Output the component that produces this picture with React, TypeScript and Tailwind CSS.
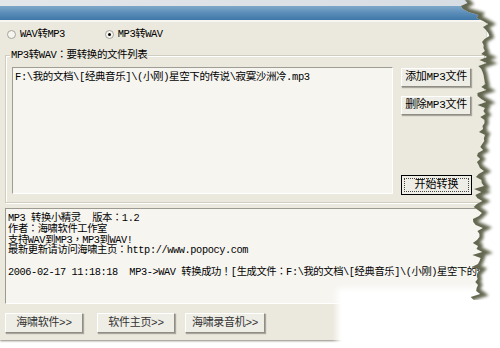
import React from 'react';

// 1. DONNÉES
const logLines = [
  'MP3 转换小精灵  版本：1.2',
  '作者：海啸软件工作室',
  '支持WAV到MP3，MP3到WAV!',
  '最新更新请访问海啸主页：http://www.popocy.com',
  '\u00a0',
  '2006-02-17 11:18:18  MP3->WAV 转换成功！[生成文件：F:\\我的文档\\[经典音乐]\\(小刚)星空下的传说\\寂寞沙洲冷.wav]',
];

const font = "font-['Liberation_Mono','Noto_Sans_CJK_TC',monospace]";

// bord déchiré (coordonnées locales du svg, x 0 = 450px)
function tornEdge() {
  const pts: [number, number][] = [];
  let seed = 11;
  const rnd = () => {
    seed = (seed * 9301 + 49297) % 233280;
    return seed / 233280;
  };
  for (let y = 0; y <= 300; y += 3) {
    let base = 30;
    if (y < 6) base = 13;
    else if (y < 20) base = 13 + (y - 6) * 1.4;
    else base = 35 - (y - 20) * 0.035;
    const j = (rnd() - 0.5) * 11;
    pts.push([base + j, y]);
  }
  return pts;
}

function Radio({ checked, label }: { checked?: boolean; label: string }) {
  return (
    <div className="flex items-center gap-[4px]">
      <span className="w-[9px] h-[9px] rounded-full border border-[#a4a39a] bg-[#f6f5f0] flex items-center justify-center">
        {checked && <span className="w-[3px] h-[3px] rounded-full bg-black" />}
      </span>
      <span className="text-[10.5px] leading-none tracking-[-0.5px] text-black">{label}</span>
    </div>
  );
}

function XpButton({ label, className = '', def }: { label: string; className?: string; def?: boolean }) {
  if (def) {
    return (
      <div className={`border border-black bg-[#eeede6] p-[2px] ${className}`}>
        <div className="h-full border border-dotted border-[#444] flex items-center justify-center text-[11px] leading-none text-black">
          {label}
        </div>
      </div>
    );
  }
  return (
    <div
      className={`border border-t-white border-l-white border-r-[#8f8d84] border-b-[#8f8d84] bg-[#eeede6] shadow-[1px_1px_1px_#a9a79e] flex items-center justify-center text-[11px] leading-none tracking-[-0.3px] ${className}`}
    >
      {label}
    </div>
  );
}

export default function App() {
  const pts = tornEdge();
  const line = pts.map(([x, y]) => `${x},${y}`).join(' ');
  const white = `50,0 ${line} 50,300`;

  return (
    <div className={`relative w-[500px] h-[348px] overflow-hidden bg-white text-black ${font}`}>
      {/* Fenêtre */}
      <div className="w-[486px] h-[340px] bg-[#ebe9dd] flex flex-col shadow-[0_1px_2px_#8a887c]">
        {/* Barre de titre */}
        <div className="h-[6px] bg-gradient-to-r from-[#e4e7ea] to-[#d6dde3]" />
        <div className="h-[14px] bg-gradient-to-b from-[#7ea8c9] via-[#5b8db8] to-[#3f78a8]" />
        <div className="h-[2px] bg-[#f7f6f1]" />

        {/* Choix du mode */}
        <div className="h-[24px] flex items-center pl-[7px] gap-[40px]">
          <Radio label="WAV转MP3" />
          <Radio checked label="MP3转WAV" />
        </div>

        {/* Groupe fichiers */}
        <div className="relative mt-[9px] ml-[5px] w-[480px] border border-[#cfcdbf] shadow-[inset_1px_1px_0_#fff,1px_1px_0_#fff] pt-[11px] pl-[6px] pb-[7px] flex gap-[8px]">
          <span className="absolute -top-[6px] left-[4px] bg-[#ebe9dd] px-px text-[10.5px] leading-[11px] tracking-[-0.4px]">
            MP3转WAV：要转换的文件列表
          </span>
          <div className="w-[381px] h-[127px] bg-[#f6f5f0] border border-t-[#a09e94] border-l-[#a09e94] border-r-white border-b-white px-[2px] pt-[3px] text-[10.5px] leading-[12px] tracking-[-0.4px] whitespace-nowrap overflow-hidden">
            F:\我的文档\[经典音乐]\(小刚)星空下的传说\寂寞沙洲冷.mp3
          </div>
          <div className="flex flex-col pt-[1px]">
            <XpButton label="添加MP3文件" className="w-[70px] h-[19px]" />
            <XpButton label="删除MP3文件" className="w-[70px] h-[19px] mt-[9px]" />
            <XpButton def label="开始转换" className="w-[71px] h-[20px] mt-[60px]" />
          </div>
        </div>

        {/* Journal */}
        <div className="mt-[5px] ml-[5px] w-[480px] h-[96px] bg-[#f6f5f0] border border-t-[#9d9b91] border-l-[#9d9b91] border-r-white border-b-white pl-[2px] pt-[4px] overflow-hidden">
          {logLines.map((l, i) => (
            <div key={i} className="text-[10.3px] leading-[10.8px] tracking-[-0.4px] whitespace-pre">
              {l}
            </div>
          ))}
        </div>

        {/* Boutons du bas */}
        <div className="mt-[9px] pl-[5px] flex">
          <XpButton label="海啸软件>>" className="w-[78px] h-[20px] text-[#333]" />
          <XpButton label="软件主页>>" className="w-[78px] h-[20px] ml-[14px] text-[#333]" />
          <XpButton label="海啸录音机>>" className="w-[80px] h-[20px] ml-[10px] text-[#333]" />
        </div>
      </div>

      {/* Coin bas droit effacé */}
      <div className="absolute left-[342px] top-[293px] right-0 bottom-0 bg-white shadow-[0_0_6px_5px_#fff]" />

      {/* Bord déchiré */}
      <svg className="absolute top-0 left-[450px]" width="50" height="300" viewBox="0 0 50 300">
        <defs>
          <clipPath id="paper-out">
            <polygon points={white} />
          </clipPath>
          <filter id="blur" x="-50%" y="-10%" width="200%" height="120%">
            <feGaussianBlur stdDeviation="1.8" />
          </filter>
        </defs>
        <polygon points={white} fill="#ffffff" />
        <g clipPath="url(#paper-out)">
          <polyline points={line} fill="none" stroke="#4a4d30" strokeWidth="8" filter="url(#blur)" opacity="0.85" />
        </g>
      </svg>
    </div>
  );
}
